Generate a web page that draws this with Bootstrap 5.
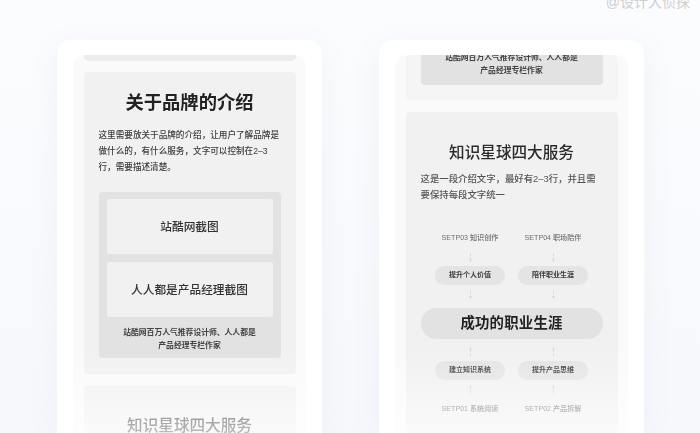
<!DOCTYPE html>
<html lang="zh-CN">
<head>
  <meta charset="UTF-8">
  <title>品牌介绍页面</title>
  <link href="https://cdn.jsdelivr.net/npm/bootstrap@5.3.0/dist/css/bootstrap.min.css" rel="stylesheet">
  <style>
    html, body { height: 433px; overflow: hidden; }
    body {
      font-family: "Liberation Sans", "Noto Sans CJK SC", sans-serif;
      background: linear-gradient(180deg, #fbfcfe 0%, #f7f8fc 100%);
      color: #333;
    }
    .stage { height: 433px; padding: 40px 0 0 57px; gap: 57px; filter: blur(.3px); }
    .phone {
      width: 265px; height: 393px; padding: 15px 16px 0;
      background: #fff; border-radius: 14px 14px 0 0;
      box-shadow: 0 6px 30px rgba(120, 130, 170, .07);
    }
    .screen {
      height: 100%; padding: 0 10.5px;
      background: #fafafa; border-radius: 12px 12px 0 0;
    }
    .sect { background: #f1f1f1; border-radius: 4px; }
    .sect-sliver { height: 6px; background: #ececec; border-radius: 0 0 5px 5px; margin: 0 0 11px; }
    .sect-brand { height: 302px; padding: 20px 15px 0; margin-bottom: 12px; }
    .sect-next { padding-top: 32px; height: 200px; }
    .sect-prev { height: 45px; padding: 0 15px; margin-bottom: 12px; background: #f5f5f5; }
    .sect-serv { height: 340px; padding: 28px 15px 0; }
    .brand-title { font-size: 18.3px; line-height: 22px; font-weight: 700; color: #222; margin: 0 0 13px; }
    .serv-title { font-size: 15.6px; line-height: 26px; font-weight: 500; color: #2b2b2b; margin: 0 0 5px; }
    .sect-next .serv-title { line-height: 16px; margin: 0; }
    .brand-text { font-size: 8.6px; line-height: 16px; font-weight: 500; color: #3c3c3c; margin: 0 0 17px; white-space: nowrap; }
    .serv-text { font-size: 9.4px; line-height: 16px; font-weight: 500; color: #555; margin: 0 0 29px; white-space: nowrap; }
    .shot-box { height: 166px; padding: 7px 8px 0; background: #e2e2e2; border-radius: 4px; }
    .shot-box-end { height: 30px; border-radius: 0 0 4px 4px; }
    .shot { height: 55px; margin-bottom: 8px; background: #f1f1f1; border-radius: 2px; font-size: 11.7px; font-weight: 500; color: #333; }
    .shot-cap { font-size: 7.8px; line-height: 12.5px; font-weight: 700; color: #444; margin: 10px 0 0; }
    .shot-box-end .shot-cap { margin: -10px 0 0; }
    .step-row { gap: 13px; }
    .step-col { width: 70px; }
    .step-label { font-size: 7.1px; line-height: 12px; font-weight: 500; color: #6f6f6f; }
    .step-pill { height: 19px; background: #e4e4e4; border-radius: 10px; font-size: 7px; font-weight: 700; color: #3a3a3a; }
    .step-main { height: 31px; background: #e2e2e2; border-radius: 16px; font-size: 14.4px; font-weight: 700; letter-spacing: .2px; color: #222; }
    .dash { display: block; width: 5px; height: 9px; margin: 5px auto 9px; }
    .dash-a { margin: 9px auto 4px; }
    .dash-c { margin: 8px auto 5px; }
    .fade-out {
      position: absolute; left: 0; right: 0; bottom: 0; height: 80px;
      background: linear-gradient(180deg, rgba(255,255,255,0) 0%, rgba(255,255,255,.68) 100%);
      pointer-events: none;
    }
    .watermark { position: absolute; top: -7px; right: 10px; font-size: 14px; line-height: 18px; color: #cfcfcf; }
  </style>
</head>
<body>
  <div class="watermark">@设计大侦探</div>

  <div class="stage d-flex">
    <!-- left phone -->
    <div class="phone position-relative">
      <div class="screen overflow-hidden">
        <div class="sect-sliver"></div>
        <div class="sect sect-brand">
          <h2 class="brand-title text-center">关于品牌的介绍</h2>
          <p class="brand-text">这里需要放关于品牌的介绍，让用户了解品牌是<br>做什么的，有什么服务，文字可以控制在2–3<br>行，需要描述清楚。</p>
          <div class="shot-box">
            <div class="shot d-flex align-items-center justify-content-center">站酷网截图</div>
            <div class="shot d-flex align-items-center justify-content-center">人人都是产品经理截图</div>
            <p class="shot-cap text-center">站酷网百万人气推荐设计师、人人都是<br>产品经理专栏作家</p>
          </div>
        </div>
        <div class="sect sect-next">
          <h2 class="serv-title text-center">知识星球四大服务</h2>
        </div>
      </div>
      <div class="fade-out"></div>
    </div>

    <!-- right phone -->
    <div class="phone position-relative">
      <div class="screen overflow-hidden">
        <div class="sect sect-prev">
          <div class="shot-box shot-box-end">
            <p class="shot-cap text-center">站酷网百万人气推荐设计师、人人都是<br>产品经理专栏作家</p>
          </div>
        </div>
        <div class="sect sect-serv">
          <h2 class="serv-title text-center">知识星球四大服务</h2>
          <p class="serv-text">这是一段介绍文字，最好有2–3行，并且需<br>要保持每段文字统一</p>

          <div class="d-flex justify-content-center step-row">
            <div class="step-col text-center">
              <div class="step-label">SETP03 知识创作</div>
              <svg class="dash dash-a" viewBox="0 0 5 9"><path d="M2.5 0V7M1.5 6.5 2.5 8.5 3.5 6.5" fill="none" stroke="#bbb" stroke-width=".6" stroke-dasharray="1 1"/></svg>
              <div class="step-pill d-flex align-items-center justify-content-center">提升个人价值</div>
              <svg class="dash" viewBox="0 0 5 9"><path d="M2.5 0V7M1.5 6.5 2.5 8.5 3.5 6.5" fill="none" stroke="#bbb" stroke-width=".6" stroke-dasharray="1 1"/></svg>
            </div>
            <div class="step-col text-center">
              <div class="step-label">SETP04 职场陪伴</div>
              <svg class="dash dash-a" viewBox="0 0 5 9"><path d="M2.5 0V7M1.5 6.5 2.5 8.5 3.5 6.5" fill="none" stroke="#bbb" stroke-width=".6" stroke-dasharray="1 1"/></svg>
              <div class="step-pill d-flex align-items-center justify-content-center">陪伴职业生涯</div>
              <svg class="dash" viewBox="0 0 5 9"><path d="M2.5 0V7M1.5 6.5 2.5 8.5 3.5 6.5" fill="none" stroke="#bbb" stroke-width=".6" stroke-dasharray="1 1"/></svg>
            </div>
          </div>

          <div class="step-main d-flex align-items-center justify-content-center">成功的职业生涯</div>

          <div class="d-flex justify-content-center step-row">
            <div class="step-col text-center">
              <svg class="dash dash-c" viewBox="0 0 5 9"><path d="M2.5 9V2M1.5 2.5 2.5 .5 3.5 2.5" fill="none" stroke="#bbb" stroke-width=".6" stroke-dasharray="1 1"/></svg>
              <div class="step-pill d-flex align-items-center justify-content-center">建立知识系统</div>
              <svg class="dash" viewBox="0 0 5 9"><path d="M2.5 9V2M1.5 2.5 2.5 .5 3.5 2.5" fill="none" stroke="#bbb" stroke-width=".6" stroke-dasharray="1 1"/></svg>
              <div class="step-label">SETP01 系统阅读</div>
            </div>
            <div class="step-col text-center">
              <svg class="dash dash-c" viewBox="0 0 5 9"><path d="M2.5 9V2M1.5 2.5 2.5 .5 3.5 2.5" fill="none" stroke="#bbb" stroke-width=".6" stroke-dasharray="1 1"/></svg>
              <div class="step-pill d-flex align-items-center justify-content-center">提升产品思维</div>
              <svg class="dash" viewBox="0 0 5 9"><path d="M2.5 9V2M1.5 2.5 2.5 .5 3.5 2.5" fill="none" stroke="#bbb" stroke-width=".6" stroke-dasharray="1 1"/></svg>
              <div class="step-label">SETP02 产品拆解</div>
            </div>
          </div>
        </div>
      </div>
      <div class="fade-out"></div>
    </div>
  </div>
  <script src="https://cdn.jsdelivr.net/npm/bootstrap@5.3.0/dist/js/bootstrap.bundle.min.js"></script>
</body>
</html>
